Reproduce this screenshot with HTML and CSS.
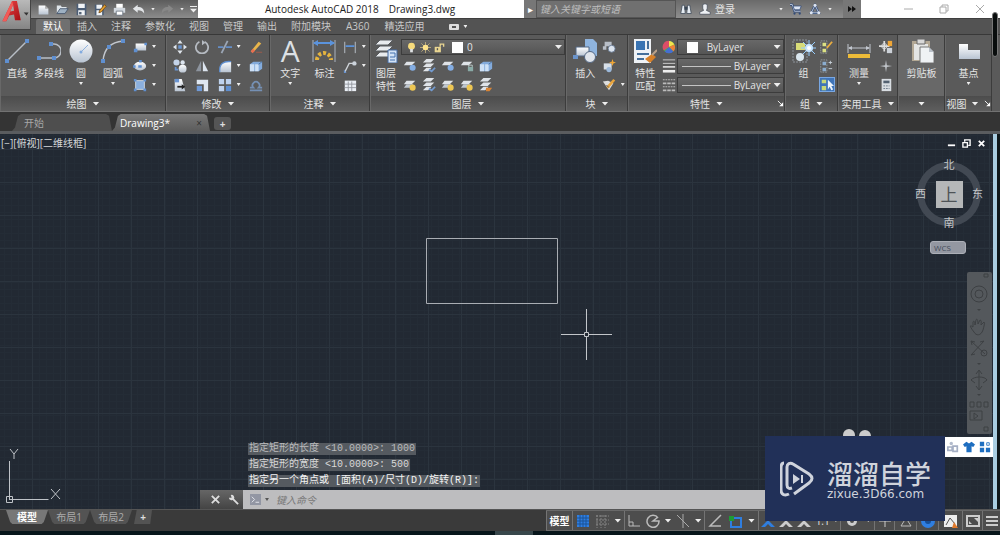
FILE: index.html
```html
<!DOCTYPE html>
<html lang="zh-CN">
<head>
<meta charset="utf-8">
<title>Autodesk AutoCAD 2018 - Drawing3.dwg</title>
<link rel="stylesheet" href="styles.css">
</head>
<body>
<svg class="defs" aria-hidden="true">
  <defs>
    <linearGradient id="lt" x1="0" y1="0" x2="0" y2="1"><stop offset="0" stop-color="#fff"/><stop offset="1" stop-color="#b9c4d2"/></linearGradient>
    <linearGradient id="red" x1="0" y1="0" x2="1" y2="1"><stop offset="0" stop-color="#ef4a4a"/><stop offset="1" stop-color="#a30d12"/></linearGradient>
  </defs>
  <symbol id="new" viewBox="0 0 16 16"><path d="M2 3h8l4 4v7H2z" fill="url(#lt)"/><path d="M10 3v4h4" fill="#aaa"/></symbol>
  <symbol id="open" viewBox="0 0 16 16"><path d="M1 13V3h5l1 2h6v2" fill="#dfe5ea"/><path d="M1 13l4-6h10l-4 6z" fill="#9db0c2" stroke="#42536a"/></symbol>
  <symbol id="save" viewBox="0 0 16 16"><path d="M2 1h12v14H2z" fill="#4b5d75"/><path d="M4 1h8v5H4zM4 9h8v6H4z" fill="#f1f3f6"/><path d="M5 11h3v3H5z" fill="#526276"/></symbol>
  <symbol id="saveas" viewBox="0 0 16 16"><path d="M1 2h11v13H1z" fill="#4b5d75"/><path d="M3 2h7v5H3zM3 9h7v6H3z" fill="#eef2f6"/><path d="M7 9l6-7 2 2-6 7-3 1z" fill="#e7a22e" stroke="#714817"/></symbol>
  <symbol id="print" viewBox="0 0 16 16"><path d="M4 1h8v5H4z" fill="#fff"/><path d="M1 6h14v6H1z" fill="#d2d8df"/><path d="M4 10h8v5H4z" fill="#fff" stroke="#66717f"/></symbol>
  <symbol id="undo" viewBox="0 0 16 16"><path d="M1 7l6-5v3c5 0 8 2 8 8-2-3-4-4-8-4v3z" fill="#e2e5e8"/></symbol>
  <symbol id="redo" viewBox="0 0 16 16"><path d="M15 7L9 2v3c-5 0-8 2-8 8 2-3 4-4 8-4v3z" fill="#888"/></symbol>
  <symbol id="binoc" viewBox="0 0 16 16"><path d="M1 14L3 3h3l1 11zM9 14l1-11h3l2 11z" fill="#e7edf3" stroke="#394654"/><path d="M6 5h4v4H6z" fill="#394654"/></symbol>
  <symbol id="user" viewBox="0 0 16 16"><path d="M1 15v-3l5-2-1-3V2l3-1 3 1v5l-1 3 5 2v3z" fill="#edf0f4" stroke="#454d59"/></symbol>
  <symbol id="cart" viewBox="0 0 16 16"><path d="M0 2h3l3 9h8" fill="none" stroke="#314a77" stroke-width="3"/><path d="M0 2h3l3 9h8" fill="none" stroke="#dce4f2"/><path d="M4 4h11l-2 5H6z" fill="#dce4f2" stroke="#314a77"/><circle cx="6" cy="14" r="1.500" fill="#314a77"/><circle cx="13" cy="14" r="1.500" fill="#314a77"/></symbol>
  <symbol id="a360" viewBox="0 0 16 16"><path d="M8 3L3 13h10z" fill="none" stroke="#314a77" stroke-width="3"/><path d="M8 3L3 13h10z" fill="none" stroke="#dce4f2"/><circle cx="8" cy="3" r="2" fill="#dce4f2"/><circle cx="3" cy="13" r="2" fill="#dce4f2"/><circle cx="13" cy="13" r="2" fill="#dce4f2"/></symbol>

  <symbol id="line" viewBox="0 0 24 24"><path d="M2 22L22 2" stroke="#b8bec6" stroke-width="1.500"/><path d="M0 20h4v4H0zM20 0h4v4h-4z" fill="#5f8fd0"/></symbol>
  <symbol id="pline" viewBox="0 0 24 24"><path d="M2 19h15a7 7 0 0 0 0-14h-4" fill="none" stroke="#b8bec6" stroke-width="1.500"/><path d="M0 17h4v4H0zM15 17h4v4h-4zM12 3h4v4h-4z" fill="#5f8fd0"/></symbol>
  <symbol id="circle" viewBox="0 0 24 24"><circle cx="12" cy="12" r="11.500" fill="url(#lt)"/><path d="M12 13l7-7" stroke="#8fb2df"/><circle cx="12" cy="13" r="1.500" fill="#83abdf"/></symbol>
  <symbol id="arc" viewBox="0 0 24 24"><path d="M2 22C3 9 10 3 22 2" fill="none" stroke="#c2c7ce" stroke-width="1.500"/><path d="M0 20h4v4H0zM6 6h4v4H6zM20 0h4v4h-4z" fill="#5f8fd0"/></symbol>
  <symbol id="rect" viewBox="0 0 16 16"><path d="M3 4h12v8H3z" fill="url(#lt)"/><path d="M1 10h4v4H1zM13 3h3v3h-3z" fill="#5f8fd0"/></symbol>
  <symbol id="ellipse" viewBox="0 0 16 16"><ellipse cx="8" cy="8" rx="7" ry="5" fill="url(#lt)"/><path d="M6 7h4v3H6zM7 1h3v3H7zM0 7h3v3H0z" fill="#5f8fd0"/></symbol>
  <symbol id="hatch" viewBox="0 0 16 16"><path d="M3 3h10v10H3z" fill="#8bb0df" stroke="#d3dbe5"/><path d="M1 1h3v3H1zM12 1h3v3h-3zM1 12h3v3H1zM12 12h3v3h-3z" fill="#5f8fd0"/></symbol>
  <symbol id="move" viewBox="0 0 16 16"><path d="M8 0l3 4H5zM8 16l3-4H5zM0 8l4-3v6zM16 8l-4-3v6z" fill="#dfe5ec"/><path d="M6 6h4v4H6z" fill="#6994d1"/></symbol>
  <symbol id="rotate" viewBox="0 0 16 16"><path d="M5 2a7 7 0 1 0 6 0" fill="none" stroke="#b6bbc2" stroke-width="2"/><path d="M8 0l4 3-4 3z" fill="#b6bbc2"/></symbol>
  <symbol id="trim" viewBox="0 0 16 16"><path d="M0 8h6M9 8h7" stroke="#658fc8" stroke-width="2"/><path d="M4 15L11 1" stroke="#9ba6b5" stroke-width="2"/></symbol>
  <symbol id="copy" viewBox="0 0 16 16"><circle cx="4" cy="4" r="3.500" fill="#c3d3e9"/><circle cx="11" cy="11" r="4.500" fill="url(#lt)"/><circle cx="11" cy="4" r="2.500" fill="#dce4ee"/><path d="M3 9v3h3" fill="none" stroke="#6994d1" stroke-width="2"/></symbol>
  <symbol id="mirror" viewBox="0 0 16 16"><path d="M7 2v12H1z" fill="#8d949e"/><path d="M9 2v12h6z" fill="#dce4ee"/></symbol>
  <symbol id="fillet" viewBox="0 0 16 16"><path d="M2 15C1 6 6 2 15 3v12z" fill="url(#lt)"/><path d="M2 15C1 6 6 2 15 3" fill="none" stroke="#5f8fd0" stroke-width="1.500"/></symbol>
  <symbol id="stretch" viewBox="0 0 16 16"><path d="M2 1h8l4 14H2z" fill="url(#lt)"/><path d="M5 10h6" stroke="#222" stroke-width="2"/><path d="M10 7l4 3-4 3z" fill="#222"/><path d="M2 1h5v4H2z" fill="#6994d1"/></symbol>
  <symbol id="scale" viewBox="0 0 16 16"><path d="M2 2h13v13h-5V7H2z" fill="#dfe7f1"/><path d="M2 9h6v6H2z" fill="#709ad7"/></symbol>
  <symbol id="array" viewBox="0 0 16 16"><path d="M1 1h6v6H1zM9 1h6v6H9zM1 9h6v6H1z" fill="#bed2ee"/><path d="M9 9h6v6H9z" fill="#5f8fd0"/></symbol>
  <symbol id="erase" viewBox="0 0 16 16"><path d="M2 13l9-11 3 2-9 10z" fill="#e8b54b"/><path d="M2 13l2 2 3-3-3-2z" fill="#e76e51"/><path d="M8 14h7" stroke="#a45b4a"/></symbol>
  <symbol id="explode" viewBox="0 0 16 16"><path d="M1 6l4-3h10v8l-4 3H1z" fill="#83abdc"/><path d="M1 6h5v8H1zM7 6h4v8H7z" fill="#cfe1f5"/><path d="M11 6l4-3" stroke="#486f9d"/></symbol>
  <symbol id="offset" viewBox="0 0 16 16"><path d="M1 14h14M1 11h4a4 4 0 1 1 6 0h4" fill="none" stroke="#7590b4" stroke-width="2"/></symbol>

  <symbol id="dim" viewBox="0 0 24 24"><path d="M1 1v22M23 1v22" stroke="#aab3bf"/><path d="M2 4h20" stroke="#5b93dc" stroke-width="2"/><path d="M1 4l5-3v6zM23 4l-5-3v6z" fill="#5b93dc"/><path d="M5 21a7 7 0 0 1 14 0" fill="none" stroke="#e5b43f" stroke-width="4" stroke-dasharray="3 2"/></symbol>
  <symbol id="dimsm" viewBox="0 0 16 16"><path d="M2 2v13M14 2v13" stroke="#c2cad4"/><path d="M3 7h10" stroke="#5b93dc" stroke-width="2"/></symbol>
  <symbol id="leader" viewBox="0 0 16 16"><path d="M2 15L7 5h6" fill="none" stroke="#d0d4d9" stroke-width="1.500"/><circle cx="13" cy="5" r="2.500" fill="#ccd3db"/><path d="M1 12v4h3z" fill="#6994d1"/></symbol>
  <symbol id="table" viewBox="0 0 16 16"><path d="M2 3h13v12H2z" fill="#e9eef4"/><path d="M2 7h13M2 11h13M6 4v11M10 4v11" stroke="#91959c"/></symbol>
  <symbol id="stack" viewBox="0 0 24 24"><path d="M6 1h13l-5 5H1zM6 7h13l-5 5H1zM6 13h13l-5 5H1z" fill="#e8ebee" stroke="#575a5e"/><path d="M14 11h9v13h-9z" fill="#d4e4f6" stroke="#446aa2"/><path d="M16 14h5v4h-5M16 21h5" fill="none" stroke="#4271af"/></symbol>
  <symbol id="lay" viewBox="0 0 16 16"><path d="M4 3h10l-4 4H1z" fill="#dfe3e8"/></symbol>
  <symbol id="lay-y" viewBox="0 0 16 16"><use href="#lay"/><path d="M4 7h8l-4 4H1z" fill="#bfc7d0"/><circle cx="11" cy="11" r="3.500" fill="#edc653"/></symbol>
  <symbol id="lay-b" viewBox="0 0 16 16"><use href="#lay"/><circle cx="11" cy="10" r="3.500" fill="#83ade3"/></symbol>
  <symbol id="lay-m" viewBox="0 0 16 16"><path d="M5 0h9l-4 4H1zM5 5h9l-4 4H1zM5 10h6l-4 4H1z" fill="#dfe3e8"/><path d="M8 12l3 2 4-4" fill="none" stroke="#739bd0" stroke-width="2"/></symbol>
  <symbol id="lay-l" viewBox="0 0 16 16"><use href="#lay"/><path d="M9 9h6v5H9z" fill="#89aaa6"/><path d="M10 9V7h4v2" fill="none" stroke="#c3d3d1"/></symbol>
  <symbol id="lay-o" viewBox="0 0 16 16"><path d="M5 0h9l-4 4H1zM5 5h9l-4 4H1zM5 10h6l-4 4H1z" fill="#dfe3e8"/><path d="M8 11h7l-3 4H8z" fill="#d88435"/></symbol>
  <symbol id="bulb" viewBox="0 0 16 16"><circle cx="8" cy="6" r="5" fill="#f7db7b"/><path d="M6 10h4v5H6z" fill="#dfe2e4"/></symbol>
  <symbol id="sun" viewBox="0 0 16 16"><path d="M8 0v16M0 8h16M2 2l12 12M14 2L2 14" stroke="#d9c387"/><circle cx="8" cy="8" r="4" fill="#ffe48c"/></symbol>
  <symbol id="lock" viewBox="0 0 16 16"><path d="M1 7h9v8H1z" fill="#e9d591"/><path d="M9 7V3h5v4" fill="none" stroke="#e9d591" stroke-width="2"/><path d="M5 9v3" stroke="#555" stroke-width="2"/></symbol>
  <symbol id="insert" viewBox="0 0 24 24"><path d="M12 0h8l4 4v13H12z" fill="#8fb4de"/><path d="M3 8h13v9H3z" fill="url(#lt)" stroke="#536783"/><circle cx="17" cy="18" r="5.500" fill="#dfe4eb" stroke="#536783"/><path d="M0 16h5v4H0z" fill="#6a93ca"/></symbol>
  <symbol id="block1" viewBox="0 0 16 16"><path d="M3 2h8v5H3zM1 7h4v4H1z" fill="#b8bec7"/><circle cx="11" cy="10" r="4" fill="#dce4ee" stroke="#637690"/></symbol>
  <symbol id="block2" viewBox="0 0 16 16"><path d="M2 5h9v7H2z" fill="#d7dfe8"/><circle cx="8" cy="12" r="3" fill="#9cb9db"/><path d="M12 0l1 3 3 1-3 1-1 3-1-3-3-1 3-1z" fill="#f0a635"/></symbol>
  <symbol id="block3" viewBox="0 0 16 16"><path d="M1 4l6-1 6 3-5 8z" fill="#dedede"/><path d="M6 11l8-9" stroke="#e8a43c" stroke-width="3"/><path d="M5 8l3 3" stroke="#555"/></symbol>
  <symbol id="match" viewBox="0 0 24 24"><path d="M1 0h17v24H1z" fill="#eef2f6"/><path d="M3 2h9v9H3z" fill="#3974b3"/><path d="M15 2v8M4 15h12M4 20h7" stroke="#456f9a" stroke-width="2"/><path d="M12 20l7-5 4 3-6 6z" fill="#d78028"/><path d="M19 16l5-5" stroke="#b9a18a" stroke-width="2"/></symbol>
  <symbol id="wheel" viewBox="0 0 16 16"><circle cx="8" cy="8" r="7" fill="#45b64d"/><path d="M8 8V1a7 7 0 0 1 6 4z" fill="#f3e34e"/><path d="M8 8l6-3a7 7 0 0 1-1 8z" fill="#ed8139"/><path d="M8 8l5 5a7 7 0 0 1-10 0z" fill="#456ed0"/><path d="M8 8L2 12A7 7 0 0 1 8 1z" fill="#dc4d68"/></symbol>
  <symbol id="weight" viewBox="0 0 16 16"><path d="M1 1h14M1 5h14" stroke="#d6d6d6"/><path d="M1 9h14" stroke="#d6d6d6" stroke-width="2"/><path d="M1 14h14" stroke="#eee" stroke-width="3"/></symbol>
  <symbol id="ltype" viewBox="0 0 16 16"><path d="M1 2h14M1 10h14" stroke="#c9c9c9" stroke-dasharray="2 1"/><path d="M1 6h14M1 14h14" stroke="#bbb" stroke-width="2" stroke-dasharray="4 1"/></symbol>
  <symbol id="group" viewBox="0 0 24 24"><path d="M1 1h14v22H1z" fill="none" stroke="#8c9299" stroke-dasharray="2 1"/><path d="M4 4h9v7H4z" fill="#d8dc78"/><circle cx="8" cy="18" r="4" fill="#dbe7ef"/><path d="M17 1v16M9 9h15M11 3l12 12M23 3L11 15" stroke="#96ceff"/><circle cx="17" cy="9" r="4" fill="#c5e4ff"/><circle cx="17" cy="9" r="2" fill="#fff"/></symbol>
  <symbol id="grp1" viewBox="0 0 16 16"><path d="M2 1h7v14H2z" fill="none" stroke="#959b9f" stroke-dasharray="2 1"/><path d="M4 3h4v4H4zM4 10h4v4H4z" fill="#dce183"/><path d="M9 9l6-7" stroke="#e9ad41" stroke-width="2"/></symbol>
  <symbol id="grp2" viewBox="0 0 16 16"><path d="M2 1h7v14H2z" fill="none" stroke="#959b9f" stroke-dasharray="2 1"/><path d="M4 3h4v4H4zM4 10h4v4H4z" fill="#8badcf"/><path d="M11 4h4M13 2v4M11 11h4" stroke="#cad3dc"/></symbol>
  <symbol id="grp3" viewBox="0 0 16 16"><path d="M2 2h5v4H2zM2 9h5v5H2z" fill="#c7d779"/><path d="M9 2v11l2-3 2 4 2-1-2-4h3z" fill="#eef5fb"/></symbol>
  <symbol id="measure" viewBox="0 0 24 24"><path d="M1 5v9M23 5v9M2 9h20" stroke="#c2c7cf"/><path d="M1 9l4-2v4zM23 9l-4-2v4z" fill="#c2c7cf"/><path d="M1 15h22v4H1z" fill="#edbb38"/></symbol>
  <symbol id="util1" viewBox="0 0 16 16"><path d="M6 1v12M0 7h12" stroke="#ddd" stroke-width="2"/><circle cx="6" cy="7" r="3" fill="none" stroke="#ddd"/><path d="M10 1h5v6h-5z" fill="#efa637"/><path d="M9 9h6v6H9z" fill="#ccd1d8"/></symbol>
  <symbol id="util2" viewBox="0 0 16 16"><path d="M8 1l1 6 6 1-6 1-1 6-1-6-6-1 6-1z" fill="#c0c4c9"/></symbol>
  <symbol id="calc" viewBox="0 0 16 16"><path d="M3 1h11v14H3z" fill="#d8dde2"/><path d="M5 3h7v3H5z" fill="#536171"/><path d="M5 9h7M5 12h7" stroke="#667382" stroke-dasharray="2 1"/></symbol>
  <symbol id="paste" viewBox="0 0 24 24"><path d="M2 2h18v20H2z" fill="#b3a895"/><path d="M4 5h14v16H4z" fill="#e4e5e4"/><path d="M7 0h8v5H7z" fill="#d8d8d8" stroke="#686868"/><path d="M10 8h9l5 5v11H10z" fill="#eff2f4" stroke="#777"/><path d="M19 8v5h5" fill="#b9c0c8"/></symbol>
  <symbol id="base" viewBox="0 0 24 24"><path d="M2 5h9v6h12v9H2z" fill="url(#lt)"/></symbol>
  <symbol id="launch" viewBox="0 0 16 16"><path d="M2 2l9 9" stroke="#fff" stroke-width="2"/><path d="M14 5v9H5z" fill="#fff"/></symbol>
</svg>

<header class="top">
  <button class="logo" aria-label="应用程序菜单"><svg viewBox="0 0 30 30"><path d="M2 22L12 1h5l4 20h-6l-1-6-5 1-3 6zM10 12l4-1-1-6z" fill="url(#red)" fill-rule="evenodd"/><path d="M2 22L12 1l1 4-7 17z" fill="#f25b57"/><path d="M24 13h5l-2 3z" fill="#333"/></svg></button>
  <div class="titlebar">
    <nav class="quick" aria-label="快速访问">
      <button><svg><use href="#new"/></svg></button><button><svg><use href="#open"/></svg></button><button><svg><use href="#save"/></svg></button><button><svg><use href="#saveas"/></svg></button><button><svg><use href="#print"/></svg></button><button><svg><use href="#undo"/></svg></button><i class="caret"></i><button><svg><use href="#redo"/></svg></button><i class="caret"></i><i class="caret bar"></i>
    </nav>
    <h1 class="title"><span>Autodesk AutoCAD 2018</span><span>Drawing3.dwg</span></h1>
    <button class="expand" aria-label="展开搜索">▸</button>
    <input class="search" aria-label="搜索" placeholder="键入关键字或短语">
    <div class="account">
      <button><svg><use href="#binoc"/></svg></button><button class="login"><svg><use href="#user"/></svg>登录</button><i class="caret push"></i><button><svg><use href="#cart"/></svg></button><button><svg><use href="#a360"/></svg></button><i class="caret"></i><button class="more" aria-label="更多"><svg viewBox="0 0 12 12"><path d="M2 3l4 3-4 3zM6 3l4 3-4 3z" fill="#111"/></svg></button>
    </div>
    <div class="window">
      <button aria-label="最小化"><svg viewBox="0 0 12 12"><path d="M2 6h9" stroke="#aaa"/></svg></button><button aria-label="还原"><svg viewBox="0 0 12 12"><path d="M2 4h6v6H2zM4 4V2h6v6H8" fill="none" stroke="#aaa"/></svg></button><button aria-label="关闭"><svg viewBox="0 0 12 12"><path d="M2 2l8 8M10 2l-8 8" stroke="#aaa"/></svg></button>
    </div>
  </div>
  <nav class="menu">
    <button class="on">默认</button><button>插入</button><button>注释</button><button>参数化</button><button>视图</button><button>管理</button><button>输出</button><button>附加模块</button><button class="latin">A360</button><button>精选应用</button>
    <button class="rec" aria-label="功能区选项"><span></span><i class="caret"></i></button>
  </nav>
</header>

<main class="ribbon">
  <section class="panel p-draw">
    <div class="tools">
      <button class="big"><svg><use href="#line"/></svg>直线</button><button class="big"><svg><use href="#pline"/></svg>多段线</button><button class="big"><svg><use href="#circle"/></svg>圆<i class="caret"></i></button><button class="big"><svg><use href="#arc"/></svg>圆弧<i class="caret"></i></button>
      <div class="col"><button><svg><use href="#rect"/></svg><i class="caret"></i></button><button><svg><use href="#ellipse"/></svg><i class="caret"></i></button><button><svg><use href="#hatch"/></svg><i class="caret"></i></button></div>
    </div>
    <h2>绘图<i class="caret lg"></i></h2>
  </section>
  <section class="panel p-mod">
    <div class="tools">
      <div class="col"><button><svg><use href="#move"/></svg></button><button><svg><use href="#copy"/></svg></button><button><svg><use href="#stretch"/></svg></button></div>
      <div class="col"><button><svg><use href="#rotate"/></svg></button><button><svg><use href="#mirror"/></svg></button><button><svg><use href="#scale"/></svg></button></div>
      <div class="col"><button><svg><use href="#trim"/></svg><i class="caret"></i></button><button><svg><use href="#fillet"/></svg><i class="caret"></i></button><button><svg><use href="#array"/></svg><i class="caret"></i></button></div>
      <div class="col"><button><svg><use href="#erase"/></svg></button><button><svg><use href="#explode"/></svg></button><button><svg><use href="#offset"/></svg></button></div>
    </div>
    <h2>修改<i class="caret lg"></i></h2>
  </section>
  <section class="panel p-ann">
    <div class="tools">
      <button class="big"><span class="glyph">A</span>文字<i class="caret"></i></button><button class="big"><svg><use href="#dim"/></svg>标注</button>
      <div class="col"><button><svg><use href="#dimsm"/></svg><i class="caret"></i></button><button><svg><use href="#leader"/></svg><i class="caret"></i></button><button><svg><use href="#table"/></svg></button></div>
    </div>
    <h2>注释<i class="caret lg"></i></h2>
  </section>
  <section class="panel p-lay">
    <div class="tools">
      <button class="big"><svg><use href="#stack"/></svg>图层<br>特性</button>
      <div class="stackcol">
        <label class="combo layer"><svg><use href="#bulb"/></svg><svg><use href="#sun"/></svg><svg><use href="#lock"/></svg><span class="swatch"></span><select aria-label="图层"><option>0</option></select><i class="caret lg"></i></label>
        <div class="line"><button><svg><use href="#lay-b"/></svg></button><button><svg><use href="#lay-m"/></svg></button><button><svg><use href="#lay-b"/></svg></button><button><svg><use href="#lay-l"/></svg></button><button><svg><use href="#explode"/></svg></button></div>
        <div class="line"><button><svg><use href="#lay-y"/></svg></button><button><svg><use href="#lay-m"/></svg></button><button><svg><use href="#lay-y"/></svg></button><button><svg><use href="#lay-y"/></svg></button><button><svg><use href="#lay-o"/></svg></button></div>
      </div>
    </div>
    <h2>图层<i class="caret lg"></i></h2>
  </section>
  <section class="panel p-blk">
    <div class="tools">
      <button class="big"><svg><use href="#insert"/></svg>插入</button>
      <div class="col"><button><svg><use href="#block1"/></svg></button><button><svg><use href="#block2"/></svg></button><button><svg><use href="#block3"/></svg><i class="caret"></i></button></div>
    </div>
    <h2>块<i class="caret lg"></i></h2>
  </section>
  <section class="panel p-prop">
    <div class="tools">
      <button class="big"><svg><use href="#match"/></svg>特性<br>匹配</button>
      <div class="col"><button><svg><use href="#wheel"/></svg></button><button><svg><use href="#weight"/></svg></button><button><svg><use href="#ltype"/></svg></button></div>
      <div class="stackcol">
        <label class="combo color"><span class="swatch"></span><select aria-label="颜色"><option>ByLayer</option></select><i class="caret lg"></i></label>
        <label class="combo"><span class="rule"></span><select aria-label="线宽"><option>ByLayer</option></select><i class="caret lg"></i></label>
        <label class="combo"><span class="rule"></span><select aria-label="线型"><option>ByLayer</option></select><i class="caret lg"></i></label>
      </div>
    </div>
    <h2>特性<i class="caret lg"></i><svg class="launch"><use href="#launch"/></svg></h2>
  </section>
  <section class="panel p-grp">
    <div class="tools">
      <button class="big"><svg><use href="#group"/></svg>组</button>
      <div class="col"><button><svg><use href="#grp1"/></svg></button><button><svg><use href="#grp2"/></svg></button><button class="active"><svg><use href="#grp3"/></svg></button></div>
    </div>
    <h2>组<i class="caret lg"></i></h2>
  </section>
  <section class="panel p-util">
    <div class="tools">
      <button class="big"><svg><use href="#measure"/></svg>测量<i class="caret"></i></button>
      <div class="col"><button><svg><use href="#util1"/></svg></button><button><svg><use href="#util2"/></svg></button><button><svg><use href="#calc"/></svg></button></div>
    </div>
    <h2>实用工具<i class="caret lg"></i></h2>
  </section>
  <section class="panel p-clip">
    <div class="tools"><button class="big"><svg><use href="#paste"/></svg>剪贴板</button></div>
    <h2><i class="caret lg"></i></h2>
  </section>
  <section class="panel p-view">
    <div class="tools"><button class="big"><svg><use href="#base"/></svg>基点<i class="caret"></i></button></div>
    <h2>视图<i class="caret lg"></i><svg class="launch"><use href="#launch"/></svg></h2>
  </section>
</main>
<span class="thumb"></span>

<nav class="files">
  <button class="file">开始</button><button class="file on"><span>Drawing3*</span><span class="x">×</span></button><button class="plus">+</button>
</nav>

<section class="canvas">
  <p class="viewlabel">[−][俯视][二维线框]</p>
  <svg class="shape" width="134" height="68" viewBox="0 0 134 68"><path d="M1.500 1.500h131v65h-131z" fill="none" stroke="#a9adb3"/></svg>
  <svg class="cross" width="52" height="52" viewBox="0 0 52 52"><path d="M0 25.500h23M28 25.500h23M25.500 0v23M25.500 28v23M23.500 23.500h4v4h-4z" fill="none" stroke="#c3c6ca"/></svg>
  <svg class="ucs" width="62" height="60" viewBox="0 0 62 60"><path d="M9.500 14v39M9.500 52.500h39M6.500 49.500h6v6h-6zM10 2l4 5 4-5M14 7v5M51 42l9 10M60 42l-9 10" fill="none" stroke="#bfc3c8"/></svg>
  <div class="docbtns"><button aria-label="最小化视口"><svg viewBox="0 0 10 10"><path d="M1 7h8" stroke="#fff" stroke-width="2"/></svg></button><button aria-label="还原视口"><svg viewBox="0 0 10 10"><path d="M1 4h5v5H1zM3 3V1h6v6H7" fill="none" stroke="#fff" stroke-width="1.500"/></svg></button><button aria-label="关闭视口"><svg viewBox="0 0 10 10"><path d="M2 2l6 6M8 2L2 8" stroke="#fff" stroke-width="2"/></svg></button></div>
  <div class="compass"><span class="n">北</span><span class="w">西</span><button class="cube">上</button><span class="e">东</span><span class="s">南</span></div>
  <button class="wcs">WCS</button>
  <div class="navbar"><svg viewBox="0 0 25 162"><g fill="none" stroke="#3d4043"><path d="M17 2h4v3h-4zM17 155h4v4h-4z"/><circle cx="12" cy="22" r="8"/><circle cx="12" cy="22" r="4"/><path d="M7 60c-4-5-5-8-1-5v-5c1-2 2 0 2 3l1-5c1-2 2 0 2 4l2-4c2 0 1 3 1 5l3-3c1 1 0 4-1 8-2 6-7 6-9 2zM4 69l14 13M17 69L4 83M4 69l4 1M4 69l1 4M17 69l-4 1M4 83l4-1"/><circle cx="17" cy="81" r="3"/><path d="M12 99v18M9 102l3-4 3 4M9 114l3 4 3-4M4 108c3-4 14-4 16 0M4 108l4 3M20 108l-4 3M3 130h4v5H3zM10 130h4v5h-4zM17 130h4v5h-4zM3 139h12v9H3zM7 141l4 3-4 3z"/></g><path d="M10 37h4l-2 2zM10 91h4l-2 2zM10 122h4l-2 2z" fill="#3d4043"/></svg></div>
  <span class="edge"></span>
  <div class="cmdwrap">
    <ul class="history"><li class="dim">指定矩形的长度 &lt;10.0000&gt;: 1000</li><li>指定矩形的宽度 &lt;10.0000&gt;: 500</li><li class="now">指定另一个角点或 [面积(A)/尺寸(D)/旋转(R)]:</li></ul>
    <div class="cmd">
      <div class="grip"><button aria-label="关闭命令行"><svg viewBox="0 0 12 12"><path d="M2 2l8 8M10 2l-8 8" stroke="#ddd" stroke-width="2"/></svg></button><button aria-label="自定义"><svg viewBox="0 0 12 12"><path d="M5 5l6 6" stroke="#ddd" stroke-width="2"/><path d="M3 1l1 3-3 0a3 3 0 0 0 5 2 3 3 0 0 0-3-5" fill="#ddd"/></svg></button></div>
      <svg class="prompt" viewBox="0 0 12 12"><path d="M0 0h12v12H0z" fill="#9296a3"/><path d="M2 3l3 3-3 3M6 9h4" fill="none" stroke="#e8e9ef"/></svg><i class="caret dark"></i>
      <input aria-label="命令" placeholder="键入命令">
    </div>
  </div>
</section>

<footer class="bottom">
  <nav class="layouts"><button class="on">模型</button><button>布局1</button><button>布局2</button><button class="add">+</button></nav>
  <div class="status">
    <div class="g g1"><button class="model">模型</button></div>
    <div class="g g2"><svg viewBox="0 0 14 14"><path d="M1 1h12v12H1z" fill="#2f7ee0"/><path d="M4 1v12M7 1v12M10 1v12M1 4h12M1 7h12M1 10h12" stroke="#1d5295"/></svg><svg viewBox="0 0 14 14"><path d="M1 2h13M1 6h13M1 10h13M2 1v13M6 1v13M10 1v13" stroke="#858585" stroke-dasharray="2 1"/></svg><i class="caret lg"></i></div>
    <div class="g g3"><svg viewBox="0 0 14 14"><path d="M2 1v11h11M2 8h4v4" fill="none" stroke="#bbb"/></svg><svg viewBox="0 0 14 14"><path d="M12 4a6 6 0 1 0 1 3H7l5-4" fill="none" stroke="#bbb" stroke-width="1.500"/></svg><i class="caret lg"></i><svg viewBox="0 0 14 14"><path d="M1 1l12 12M7 0v14" stroke="#aaa"/></svg><i class="caret lg"></i></div>
    <div class="g g4"><svg viewBox="0 0 14 14"><path d="M13 1L2 12h11" fill="none" stroke="#bbb" stroke-width="1.500"/></svg><svg viewBox="0 0 14 14"><path d="M3 4h10v9H3z" fill="none" stroke="#2f7ee0" stroke-width="2"/><path d="M1 2h5v5H1z" fill="#1e9b35"/></svg><i class="caret lg"></i></div>
    <div class="g g5"><svg viewBox="0 0 14 14"><path d="M0 13l7-7 7 7h-4l-3-3-3 3z" fill="#2f7ee0"/></svg><svg viewBox="0 0 14 14"><path d="M0 13l7-7 7 7h-4l-3-3-3 3z" fill="#ccc"/></svg><svg viewBox="0 0 14 14"><path d="M0 13l7-7 7 7h-4l-3-3-3 3z" fill="#ccc"/></svg><span>1:1</span><i class="caret"></i></div>
    <div class="g g6"><svg viewBox="0 0 14 14"><circle cx="7" cy="7" r="5" fill="#ccc"/><circle cx="7" cy="7" r="2" fill="#4d4d4d"/></svg><i class="caret"></i></div>
    <div class="g g7"><svg viewBox="0 0 14 14"><path d="M7 1v12M1 7h12" stroke="#ccc"/></svg></div>
    <div class="g g8"><svg viewBox="0 0 14 14"><path d="M2 12l5-8 5 8z" fill="none" stroke="#bbb"/></svg></div>
    <div class="g g9"><svg viewBox="0 0 14 14"><circle cx="7" cy="7" r="7" fill="#2f7ee0"/><circle cx="7" cy="7" r="3" fill="#174e94"/></svg></div>
    <div class="g g10"><svg viewBox="0 0 14 14"><path d="M0 1h13v12H0z" fill="#eee"/><path d="M2 11l4-7 5 6" fill="none" stroke="#555"/><path d="M10 8l4 6H8z" fill="#e07a2c"/></svg></div>
    <div class="g g11"><svg viewBox="0 0 14 14"><path d="M1 2h12v10H1z" fill="none" stroke="#ccc" stroke-width="2"/><path d="M8 4h4v4zM3 10V7l3 3z" fill="#ccc"/></svg></div>
    <div class="g g12"><svg viewBox="0 0 14 14"><path d="M1 3h12M1 7h12M1 11h12" stroke="#ccc" stroke-width="2"/></svg></div>
  </div>
</footer>
<div class="strip"><span></span></div>

<svg class="dots" viewBox="0 0 30 10"><circle cx="7" cy="7" r="6" fill="#ccc"/><circle cx="23" cy="8" r="6" fill="#ccc"/></svg>
<aside class="brand">
  <svg viewBox="0 0 34 36"><path d="M9 33c-4 2-8 1-8-4V7c0-3 1-5 3-5" fill="none" stroke="#cfd3dc" stroke-width="3"/><path d="M12 27c-3 1-5 0-5-3V6c0-3 3-5 6-3l16 10c4 3 4 6 0 9L14 33" fill="none" stroke="#cfd3dc" stroke-width="3"/><path d="M13 13l7 5-7 5z" fill="#cfd3dc"/><path d="M22 14v8" stroke="#cfd3dc" stroke-width="2"/></svg>
  <div><strong>溜溜自学</strong><span>zixue.3D66.com</span></div>
</aside>
<div class="ime"><svg viewBox="0 0 14 14"><circle cx="5" cy="3" r="2" fill="#b3bccd"/><path d="M1 11V7h5v4zM7 6h5v6H7z" fill="none" stroke="#a5afc4" stroke-width="2"/></svg><svg viewBox="0 0 14 14"><path d="M4 1l3 2 3-2 4 3-2 3-2-1v7H4V6L2 7 0 4z" fill="#1e6ec0"/></svg><svg viewBox="0 0 14 14"><path d="M1 1h5v5H1zM1 8h5v5H1zM8 8h5v5H8z" fill="#1e6ec0"/><path d="M9 2h3v3H9z" fill="none" stroke="#1e6ec0"/></svg></div>
</body>
</html>
```
FILE: styles.css
```css
* { box-sizing: border-box; }
body {
  margin: 0;
  min-height: 100vh;
  display: flex;
  flex-direction: column;
  position: relative;
  overflow: hidden;
  background: #3a3a3a;
  color: #e4e4e4;
  font: 10px/12px "Open Sans", "Noto Sans CJK SC", sans-serif;
}
button, input, select {
  font: inherit;
  color: inherit;
  background: none;
  border: 0;
  padding: 0;
  margin: 0;
}
h1, h2, p, ul { margin: 0; padding: 0; font-weight: normal; }
ul { list-style: none; }
svg { display: block; flex: none; }
.defs { position: absolute; width: 0; height: 0; }

.caret {
  flex: none;
  width: 4px;
  height: 3px;
  background: #eee;
  clip-path: polygon(0 0, 100% 0, 50% 100%);
}
.caret.lg { width: 7px; height: 4px; }
.caret.dark { background: #555; }
.caret.bar { width: 7px; height: 7px; clip-path: polygon(0 0, 100% 0, 100% 20%, 0 20%, 0 45%, 100% 45%, 50% 100%, 0 45%); }

.top { position: relative; }
.logo {
  position: absolute;
  z-index: 1;
  width: 31px;
  height: 30px;
  background: linear-gradient(#b9b9b9, #858585);
  border-right: 1px solid #444;
  border-bottom: 1px solid #444;
}
.logo svg { width: 30px; height: 29px; }
.titlebar {
  display: flex;
  height: 18px;
  padding-left: 31px;
  background: #fff;
}
.titlebar svg { width: 12px; height: 12px; }
.quick {
  display: flex;
  align-items: center;
  gap: 6px;
  width: 167px;
  padding-left: 6px;
  background: linear-gradient(#5c5c5c, #8c8c8c);
}
.titlebar .quick svg { width: 13px; height: 13px; }
.title {
  flex: 1;
  display: flex;
  justify-content: center;
  gap: 10px;
  padding-right: 2px;
  color: #222;
  font-size: 10px;
  line-height: 18px;
}
.expand { width: 12px; background: #777; color: #fff; }
.search {
  width: 140px;
  padding: 0 3px;
  background: #707070;
  border: 1px solid #555;
  font-style: italic;
}
.search::placeholder { color: #bdbdbd; opacity: 1; }
.account {
  display: flex;
  align-items: center;
  gap: 7px;
  width: 185px;
  padding-left: 4px;
  background: linear-gradient(#6a6a6a, #8e8e8e);
}
.login { display: flex; align-items: center; gap: 4px; }
.push { margin-left: auto; }
.more { display: grid; place-items: center; width: 18px; margin-left: 4px; background: #777; align-self: stretch; }
.window {
  display: flex;
  justify-content: space-between;
  align-items: center;
  width: 139px;
  padding: 0 14px 0 41px;
}
.menu {
  display: flex;
  height: 16px;
  padding-left: 36px;
  background: #535353;
  border-top: 1px solid #3f3f3f;
  color: #c8c8c8;
}
.menu button { padding: 0 7px; line-height: 15px; }
.menu .on { background: #707070; color: #fff; border-radius: 2px 2px 0 0; }
.menu .latin { padding: 0 8px; }
.menu .rec { display: flex; align-items: center; gap: 4px; margin-left: 11px; }
.rec span { width: 10px; height: 6px; border: 2px solid #ddd; border-width: 2px 3px; border-radius: 1px; }

.ribbon {
  display: flex;
  height: 78px;
  padding-right: 8px;
  background: #5a5a5a;
  border-top: 1px solid #383838;
  border-bottom: 1px solid #727272;
}
.panel {
  display: flex;
  flex-direction: column;
  min-width: 0;
  border-right: 1px solid #3c3c3c;
  border-left: 1px solid #686868;
}
.p-draw { flex: 1 1 166px; }
.p-mod { flex: 1 1 104px; }
.p-ann { flex: 1 1 100px; }
.p-lay { flex: 1 1 196px; }
.p-blk { flex: 1 1 62px; }
.p-prop { flex: 1 1 157px; }
.p-grp { flex: 1 1 53px; }
.p-util { flex: 1 1 60px; }
.p-clip { flex: 1 1 47px; background: #686868; }
.p-view { flex: 1 1 47px; }
.panel h2 {
  position: relative;
  display: flex;
  justify-content: center;
  align-items: center;
  gap: 6px;
  height: 15px;
  background: linear-gradient(#4c4c4c, #5e5e5e);
  font-size: 10px;
  line-height: 14px;
}
.launch { width: 7px; height: 7px; }
.p-prop .launch { position: absolute; right: 0; }
.p-view h2 { gap: 5px; }
.tools {
  flex: 1;
  display: flex;
  justify-content: space-around;
  padding: 4px 2px 0;
}
.big {
  display: flex;
  flex-direction: column;
  align-items: center;
  width: 32px;
  line-height: 13px;
  white-space: nowrap;
}
.big svg { width: 24px; height: 24px; margin-bottom: 4px; }
.big .caret { margin-top: 2px; }
.glyph { height: 28px; font-size: 30px; line-height: 24px; color: #dce0e4; }
.col { display: grid; grid-auto-rows: 19px; align-content: start; }
.col button { display: flex; align-items: center; gap: 5px; height: 15px; }
.col svg { width: 14px; height: 14px; }
.col .active { background: #3f74b8; border: 1px solid #79a7e2; }
.p-draw .tools { justify-content: flex-start; padding-left: 0; }
.p-draw .col { margin-left: 4px; }
.stackcol { flex: 1; min-width: 0; display: flex; flex-direction: column; gap: 3px; }
.line { display: flex; gap: 5px; padding-left: 2px; }
.line svg { width: 14px; height: 14px; }
.line button { height: 16px; }
.p-lay .big { width: 30px; }
.combo {
  display: flex;
  align-items: center;
  gap: 3px;
  height: 16px;
  padding: 0 2px 0 4px;
  background: linear-gradient(#686868, #555);
  border: 1px solid #3c3c3c;
}
.combo svg { width: 11px; height: 11px; }
.combo select { appearance: none; min-width: 0; }
.combo .caret { margin-left: auto; }
.swatch { width: 11px; height: 11px; background: #fff; }
.layer .swatch { margin: 0 1px 0 4px; }
.layer select { flex: 1; }
.color { padding-left: 9px; }
.color .swatch { margin-right: 6px; }
.rule { flex: 1; height: 1px; background: #c4c4c4; }
.p-prop .combo select { flex: none; }
.p-prop .stackcol { flex: none; width: 107px; }
.p-prop .tools, .p-lay .tools { padding-right: 0; padding-left: 0; }
.thumb {
  position: absolute;
  right: 2px;
  top: 12px;
  width: 6px;
  height: 45px;
  border: 1px solid #777;
  border-radius: 3px;
  background: #090d0d;
}

.files {
  display: flex;
  align-items: flex-end;
  height: 22px;
  padding-left: 12px;
  border-bottom: 3px solid #5a5c5f;
  background: #343434;
  color: #a8a8a8;
}
.file {
  width: 100px;
  height: 17px;
  padding: 0 12px;
  text-align: left;
  background: #4e4e4e;
  clip-path: polygon(0 100%, 3% 80%, 6% 12%, 9% 0, 94% 0, 97% 10%, 100% 100%);
}
.file.on { display: flex; justify-content: space-between; align-items: center; padding: 0 8px; width: 98px; background: linear-gradient(#777, #5c5c5c); color: #fff; }
.file .x { color: #333; }
.plus { width: 17px; height: 13px; margin: 0 0 1px 4px; background: #555; border-radius: 3px; line-height: 12px; color: #ddd; font-weight: bold; }

.canvas {
  flex: 1;
  position: relative;
  min-height: 300px;
  background-color: #222933;
  background-image:
    linear-gradient(90deg, #2b343e 1px, transparent 1px),
    linear-gradient(#2b343e 1px, transparent 1px),
    linear-gradient(90deg, #242c36 1px, transparent 1px),
    linear-gradient(#242c36 1px, transparent 1px);
  background-size: 33px 33px, 33px 33px, 7px 7px, 7px 7px;
  background-position: 32px 0, 0 15px, 4px 0, 0 1px;
}
.viewlabel { padding: 3px 0 0 1px; color: #d6d8da; }
.shape { position: absolute; left: 425px; top: 103px; }
.cross { position: absolute; left: 561px; top: 175px; }
.ucs { position: absolute; left: 0; bottom: 2px; }
.docbtns { position: absolute; right: 14px; top: 5px; display: flex; gap: 6px; }
.docbtns svg { width: 9px; height: 9px; }
.compass {
  position: absolute;
  right: 14px;
  top: 22px;
  display: grid;
  grid-template: 18px 40px 18px / 17px 40px 17px;
  place-items: center;
  color: #c4c6c9;
  font-size: 11px;
}
.compass::before {
  content: "";
  position: absolute;
  inset: 6px 5px;
  border: 7px solid #424953;
  border-radius: 50%;
}
.compass span { position: relative; }
.compass .n, .compass .s { grid-column: 2; }
.compass .w { grid-area: 2 / 1; }
.compass .s { grid-row: 3; }
.compass .e { grid-area: 2 / 3; }
.cube { grid-area: 2 / 2; width: 27px; height: 27px; background: #b5b7b8; color: #4e5357; font-size: 17px; line-height: 25px; }
.wcs {
  position: absolute;
  right: 34px;
  top: 107px;
  width: 36px;
  height: 13px;
  padding-left: 3px;
  text-align: left;
  border-radius: 3px;
  background: #9397a1;
  border: 1px solid #acafb7;
  color: #444b59;
  font-size: 8px;
  line-height: 11px;
}
.navbar { position: absolute; right: 8px; top: 138px; width: 25px; height: 162px; background: #54585c; border-radius: 2px; }
.edge { position: absolute; right: 0; top: 0; bottom: 0; width: 7px; background: #a9cde1; border-right: 3px solid #10181b; }
.cmdwrap { position: absolute; left: 200px; right: 235px; bottom: 0; }
.history { display: flex; flex-direction: column; align-items: flex-start; gap: 4px; padding: 0 0 3px 48px; font-family: "Liberation Mono", "Noto Sans CJK SC", monospace; }
.history li { height: 12px; padding: 0 1px; background: #555a60; color: #d8d8d8; }
.history .dim { color: #b9bbbd; }
.history .now { color: #f2f2f2; }
.cmd { display: flex; align-items: center; height: 19px; background: #bdbdbf; }
.grip { display: flex; align-items: center; gap: 7px; width: 43px; height: 19px; padding-left: 10px; background: linear-gradient(#666, #444); }
.grip svg { width: 11px; height: 11px; }
.prompt { width: 11px; height: 11px; margin: 0 4px 0 7px; }
.cmd input { flex: 1; padding-left: 7px; font-style: italic; }
.cmd input::placeholder { color: #777; opacity: 1; }

.bottom { display: flex; justify-content: space-between; height: 22px; border-top: 1px solid #555; background: #3a3a3a; }
.layouts { display: flex; align-items: flex-start; padding-left: 6px; color: #aaa; }
.layouts button { width: 42px; height: 14px; line-height: 13px; background: #535353; clip-path: polygon(0 0, 100% 0, 90% 85%, 85% 100%, 15% 100%, 10% 85%); }
.layouts .on { background: #777; color: #fff; font-weight: bold; }
.layouts .add { width: 18px; margin-left: 2px; color: #ddd; font-weight: bold; clip-path: polygon(15% 0, 100% 0, 90% 100%, 0 100%); }
.status { display: flex; flex: none; width: 45.4%; background: #4d4d4d; border: 1px solid #696969; border-width: 1px 0; }
.g { display: flex; align-items: center; justify-content: space-around; border-left: 1px solid #747474; }
.g svg { width: 14px; height: 14px; }
.model { color: #fff; font-weight: bold; }
.g1 { flex: 1 1 26px; }
.g2 { flex: 1 1 52px; }
.g3 { flex: 1 1 80px; }
.g4 { flex: 1 1 54px; }
.g5 { flex: 1 1 82px; }
.g6 { flex: 1 1 34px; }
.g7 { flex: 1 1 20px; }
.g8 { flex: 1 1 22px; }
.g9 { flex: 1 1 22px; }
.g10 { flex: 1 1 24px; }
.g11 { flex: 1 1 20px; }
.g12 { flex: 1 1 18px; }
.strip { height: 4px; background: #07161b; }
.strip span { display: block; width: 38px; height: 4px; margin: 0 auto; background: #38474b; position: relative; left: 14px; }

.dots { position: absolute; right: 128px; bottom: 97px; width: 30px; height: 10px; }
.brand {
  position: absolute;
  right: 55px;
  bottom: 14px;
  display: flex;
  align-items: center;
  gap: 13px;
  width: 180px;
  height: 85px;
  padding-left: 15px;
  background: #213058;
  color: #cfd3dc;
}
.brand svg { width: 34px; height: 36px; }
.brand strong { display: block; padding-top: 2px; font-size: 26px; line-height: 28px; font-weight: 500; }
.brand div span { display: block; font: 12px/12px "DejaVu Sans", sans-serif; }
.ime { position: absolute; right: 7px; bottom: 78px; display: flex; align-items: center; justify-content: space-around; width: 48px; height: 20px; background: #fff; }
.ime svg { width: 12px; height: 12px; }
```
